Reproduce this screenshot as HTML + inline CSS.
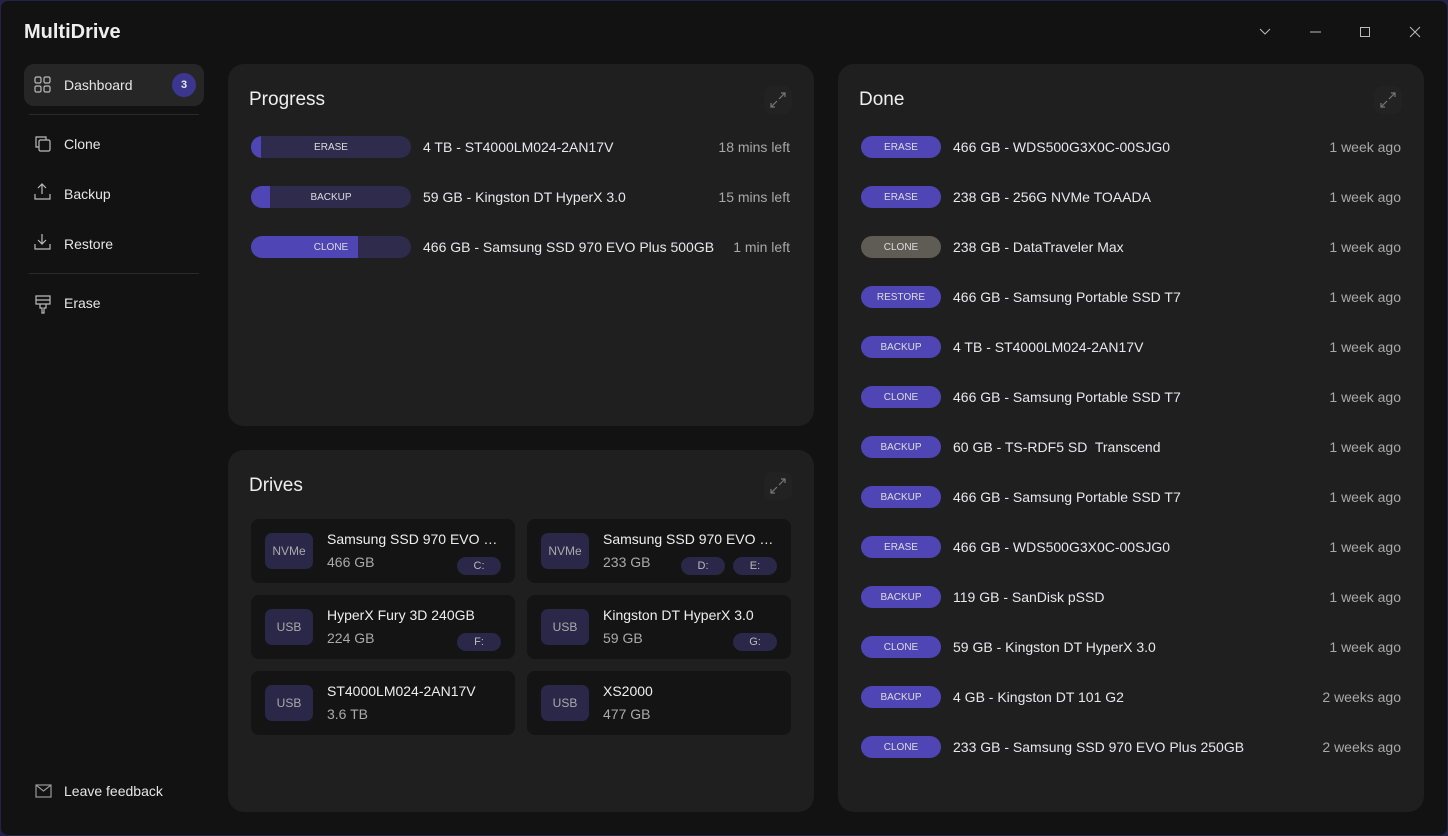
<!DOCTYPE html>
<html><head><meta charset="utf-8"><style>
*{box-sizing:border-box;margin:0;padding:0}
body{width:1448px;height:836px;background:#23224a;font-family:"Liberation Sans",sans-serif;color:#e8e8ec;overflow:hidden;position:relative}
.win{position:absolute;left:0;top:0;width:1448px;height:836px;background:#121212;border-radius:8px;border:1px solid #23224a}
.a{position:absolute}
.t{font-size:14px;white-space:nowrap}
.panel{position:absolute;background:#1f1f1f;border-radius:16px}
.ph{position:absolute;left:21px;top:25px;font-size:19px;color:#eee}
.exp{position:absolute;width:28px;height:28px;border-radius:8px;background:#222}
.bar{position:absolute;width:160px;height:22px;border-radius:11px;background:#2e2b4d;overflow:hidden}
.bar .f{position:absolute;left:0;top:0;bottom:0;background:#4f45b4}
.bar span{position:absolute;left:0;right:0;top:0;height:22px;display:flex;align-items:center;justify-content:center;font-size:10px;color:#ddd}
.pill{position:absolute;width:80px;height:22px;border-radius:11px;background:#4f45b4;display:flex;align-items:center;justify-content:center;font-size:10px;color:#ddd}
.card{position:absolute;width:264px;height:64px;background:#141414;border-radius:8px}
.ic{position:absolute;left:14px;top:14px;width:48px;height:36px;border-radius:7px;background:#2a2748;color:#aaa;font-size:12px;display:flex;align-items:center;justify-content:center}
.cn{position:absolute;left:76px;top:12px;width:176px;font-size:14px;color:#eee;white-space:nowrap;overflow:hidden;text-overflow:ellipsis}
.cs{position:absolute;left:76px;top:35px;font-size:14px;color:#aaa}
.dl{position:absolute;top:38px;width:44px;height:18px;border-radius:9px;background:#2a2748;color:#bbb;font-size:11px;display:flex;align-items:center;justify-content:center}
.nav{position:absolute;left:63px;font-size:14px;color:#e6e6e6}
.tm{position:absolute;font-size:14px;color:#a8a8a8;text-align:right}
</style></head><body><div class="win">
<div class="a" style="left:23px;top:20px;font-size:20px;font-weight:bold;color:#eee">MultiDrive</div>
<svg class="a" style="left:1254px;top:24px" width="170" height="14" fill="none" stroke="#bbb" stroke-width="1">
<path d="M5 4l5 5 5-5"/><path d="M55 7h11"/><rect x="105.5" y="2.5" width="9" height="9"/><path d="M155 2l10 10M165 2l-10 10"/></svg>
<!-- sidebar -->
<div class="a" style="left:23px;top:63px;width:180px;height:42px;background:#262626;border-radius:10px"></div>
<div class="a" style="left:171px;top:72px;width:24px;height:24px;border-radius:12px;background:#3d368f;font-size:11px;font-weight:bold;display:flex;align-items:center;justify-content:center">3</div>
<div class="a" style="left:28px;top:113px;width:170px;height:1px;background:#2a2a2a"></div>
<div class="a" style="left:28px;top:272px;width:170px;height:1px;background:#2a2a2a"></div>
<svg class="a" style="left:33px;top:75px" width="18" height="240" fill="none" stroke="#bbb" stroke-width="1.2">
<rect x="1" y="1" width="6" height="6" rx="1.5"/><rect x="10" y="1" width="6" height="6" rx="1.5"/><rect x="1" y="10" width="6" height="6" rx="1.5"/><rect x="10" y="10" width="6" height="6" rx="1.5"/>
<rect x="5" y="64" width="11" height="11" rx="1.5"/><path d="M12 64v-3h-10v10h3"/>
<path d="M8 108v10M4 112l4-4 4 4M1 118v5h15v-5"/>
<path d="M8 158v10M4 164l4 4 4-4M1 168v5h15v-5"/>
<path d="M2 220h14v8h-14zM2 224h14M6 228v4h2v5h2v-5h2v-4"/>
</svg>
<div class="nav" style="top:76px">Dashboard</div>
<div class="nav" style="top:135px">Clone</div>
<div class="nav" style="top:185px">Backup</div>
<div class="nav" style="top:235px">Restore</div>
<div class="nav" style="top:294px">Erase</div>
<svg class="a" style="left:34px;top:783px" width="18" height="14" fill="none" stroke="#999" stroke-width="1.2"><rect x="1" y="1" width="15" height="12"/><path d="M1 1l7.5 6 7.5-6"/></svg>
<div class="nav" style="top:782px">Leave feedback</div>
<!-- progress -->
<div class="panel" style="left:227px;top:63px;width:586px;height:362px">
<div class="ph">Progress</div>
<div class="exp" style="right:22px;top:22px"></div>
<svg class="a" style="right:28px;top:28px" width="16" height="16" stroke="#777" fill="none" stroke-width="1.2"><path d="M9 7l6-6M11 1h4v4M7 9l-6 6M1 11v4h4"/></svg>
<div class="bar" style="left:23px;top:72px"><div class="f" style="width:10px"></div><span>ERASE</span></div>
<div class="bar" style="left:23px;top:122px"><div class="f" style="width:19px"></div><span>BACKUP</span></div>
<div class="bar" style="left:23px;top:172px"><div class="f" style="width:107px"></div><span>CLONE</span></div>
<div class="a t" style="left:195px;top:75px">4 TB - ST4000LM024-2AN17V</div>
<div class="a t" style="left:195px;top:125px">59 GB - Kingston DT HyperX 3.0</div>
<div class="a t" style="left:195px;top:175px">466 GB - Samsung SSD 970 EVO Plus 500GB</div>
<div class="tm" style="right:24px;top:75px">18 mins left</div>
<div class="tm" style="right:24px;top:125px">15 mins left</div>
<div class="tm" style="right:24px;top:175px">1 min left</div>
</div>
<!-- drives -->
<div class="panel" style="left:227px;top:449px;width:586px;height:362px">
<div class="ph">Drives</div>
<div class="exp" style="right:22px;top:22px"></div>
<svg class="a" style="right:28px;top:28px" width="16" height="16" stroke="#777" fill="none" stroke-width="1.2"><path d="M9 7l6-6M11 1h4v4M7 9l-6 6M1 11v4h4"/></svg>
<div class="card" style="left:23px;top:69px"><div class="ic">NVMe</div><div class="cn">Samsung SSD 970 EVO Plus 500GB</div><div class="cs">466 GB</div><div class="dl" style="left:206px">C:</div></div>
<div class="card" style="left:299px;top:69px"><div class="ic">NVMe</div><div class="cn">Samsung SSD 970 EVO Plus 250GB</div><div class="cs">233 GB</div><div class="dl" style="left:154px">D:</div><div class="dl" style="left:206px">E:</div></div>
<div class="card" style="left:23px;top:145px"><div class="ic">USB</div><div class="cn">HyperX Fury 3D 240GB</div><div class="cs">224 GB</div><div class="dl" style="left:206px">F:</div></div>
<div class="card" style="left:299px;top:145px"><div class="ic">USB</div><div class="cn">Kingston DT HyperX 3.0</div><div class="cs">59 GB</div><div class="dl" style="left:206px">G:</div></div>
<div class="card" style="left:23px;top:221px"><div class="ic">USB</div><div class="cn">ST4000LM024-2AN17V</div><div class="cs">3.6 TB</div></div>
<div class="card" style="left:299px;top:221px"><div class="ic">USB</div><div class="cn">XS2000</div><div class="cs">477 GB</div></div>
</div>
<!-- done -->
<div class="panel" style="left:837px;top:63px;width:586px;height:748px">
<div class="ph">Done</div>
<div class="exp" style="right:22px;top:22px"></div>
<svg class="a" style="right:28px;top:28px" width="16" height="16" stroke="#777" fill="none" stroke-width="1.2"><path d="M9 7l6-6M11 1h4v4M7 9l-6 6M1 11v4h4"/></svg>
<div class="pill" style="left:23px;top:72px">ERASE</div><div class="a t" style="left:115px;top:75px">466 GB - WDS500G3X0C-00SJG0</div><div class="tm" style="right:23px;top:75px">1 week ago</div>
<div class="pill" style="left:23px;top:122px">ERASE</div><div class="a t" style="left:115px;top:125px">238 GB - 256G NVMe TOAADA</div><div class="tm" style="right:23px;top:125px">1 week ago</div>
<div class="pill" style="left:23px;top:172px;background:#5f5c55">CLONE</div><div class="a t" style="left:115px;top:175px">238 GB - DataTraveler Max</div><div class="tm" style="right:23px;top:175px">1 week ago</div>
<div class="pill" style="left:23px;top:222px">RESTORE</div><div class="a t" style="left:115px;top:225px">466 GB - Samsung Portable SSD T7</div><div class="tm" style="right:23px;top:225px">1 week ago</div>
<div class="pill" style="left:23px;top:272px">BACKUP</div><div class="a t" style="left:115px;top:275px">4 TB - ST4000LM024-2AN17V</div><div class="tm" style="right:23px;top:275px">1 week ago</div>
<div class="pill" style="left:23px;top:322px">CLONE</div><div class="a t" style="left:115px;top:325px">466 GB - Samsung Portable SSD T7</div><div class="tm" style="right:23px;top:325px">1 week ago</div>
<div class="pill" style="left:23px;top:372px">BACKUP</div><div class="a t" style="left:115px;top:375px">60 GB - TS-RDF5 SD&nbsp; Transcend</div><div class="tm" style="right:23px;top:375px">1 week ago</div>
<div class="pill" style="left:23px;top:422px">BACKUP</div><div class="a t" style="left:115px;top:425px">466 GB - Samsung Portable SSD T7</div><div class="tm" style="right:23px;top:425px">1 week ago</div>
<div class="pill" style="left:23px;top:472px">ERASE</div><div class="a t" style="left:115px;top:475px">466 GB - WDS500G3X0C-00SJG0</div><div class="tm" style="right:23px;top:475px">1 week ago</div>
<div class="pill" style="left:23px;top:522px">BACKUP</div><div class="a t" style="left:115px;top:525px">119 GB - SanDisk pSSD</div><div class="tm" style="right:23px;top:525px">1 week ago</div>
<div class="pill" style="left:23px;top:572px">CLONE</div><div class="a t" style="left:115px;top:575px">59 GB - Kingston DT HyperX 3.0</div><div class="tm" style="right:23px;top:575px">1 week ago</div>
<div class="pill" style="left:23px;top:622px">BACKUP</div><div class="a t" style="left:115px;top:625px">4 GB - Kingston DT 101 G2</div><div class="tm" style="right:23px;top:625px">2 weeks ago</div>
<div class="pill" style="left:23px;top:672px">CLONE</div><div class="a t" style="left:115px;top:675px">233 GB - Samsung SSD 970 EVO Plus 250GB</div><div class="tm" style="right:23px;top:675px">2 weeks ago</div>
</div>
</div></body></html>
